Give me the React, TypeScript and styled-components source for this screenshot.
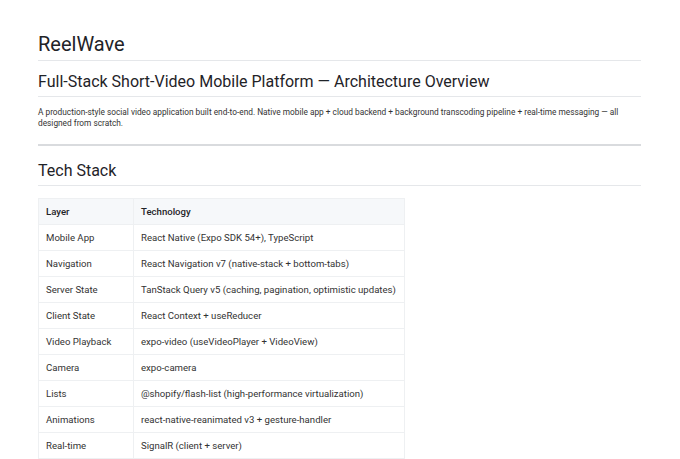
import React from "react";
import styled, { createGlobalStyle } from "styled-components";

const G = createGlobalStyle`
  body { margin: 0; background: #fff; font-family: Roboto, "Liberation Sans", sans-serif; color: #1f2328; }
`;
const Page = styled.div`padding: 28px 39px 0 38px;`;
const H1 = styled.h1`
  margin: 0; font-size: 20px; font-weight: 400; line-height: 32px;
  border-bottom: 1px solid #e5e7ea;
`;
const H2 = styled.h2<{ $top: number }>`
  margin: ${p => p.$top}px 0 0; font-size: 16px; font-weight: 400; line-height: 26px;
  border-bottom: 1px solid #e5e7ea; padding-bottom: 1px;
`;
const P = styled.p`margin: 10px 0 0; font-size: 8.3px; line-height: 11px; color: #333;`;
const Hr = styled.hr`margin: 15px 0 0; border: 0; height: 2px; background: #d9dbde;`;
const Table = styled.table`
  margin-top: 12px; border-collapse: collapse; font-size: 9.6px; color: #333; width: 367px;
  th, td { border: 1px solid #eef0f2; text-align: left; height: 25px; padding: 0 7px; white-space: nowrap; }
  th { font-weight: 500; background: #f6f8fa; color: #1f2328; }
  th:first-child, td:first-child { width: 80px; }
`;
const rows: [string, string][] = [
  ["Mobile App", "React Native (Expo SDK 54+), TypeScript"],
  ["Navigation", "React Navigation v7 (native-stack + bottom-tabs)"],
  ["Server State", "TanStack Query v5 (caching, pagination, optimistic updates)"],
  ["Client State", "React Context + useReducer"],
  ["Video Playback", "expo-video (useVideoPlayer + VideoView)"],
  ["Camera", "expo-camera"],
  ["Lists", "@shopify/flash-list (high-performance virtualization)"],
  ["Animations", "react-native-reanimated v3 + gesture-handler"],
  ["Real-time", "SignalR (client + server)"],
];
export default function App() {
  return (
    <Page>
      <G />
      <H1>ReelWave</H1>
      <H2 $top={8}>Full-Stack Short-Video Mobile Platform — Architecture Overview</H2>
      <P>A production-style social video application built end-to-end. Native mobile app + cloud backend + background transcoding pipeline + real-time messaging — all designed from scratch.</P>
      <Hr />
      <H2 $top={12}>Tech Stack</H2>
      <Table>
        <thead><tr><th>Layer</th><th>Technology</th></tr></thead>
        <tbody>{rows.map(r => <tr key={r[0]}><td>{r[0]}</td><td>{r[1]}</td></tr>)}</tbody>
      </Table>
    </Page>
  );
}
